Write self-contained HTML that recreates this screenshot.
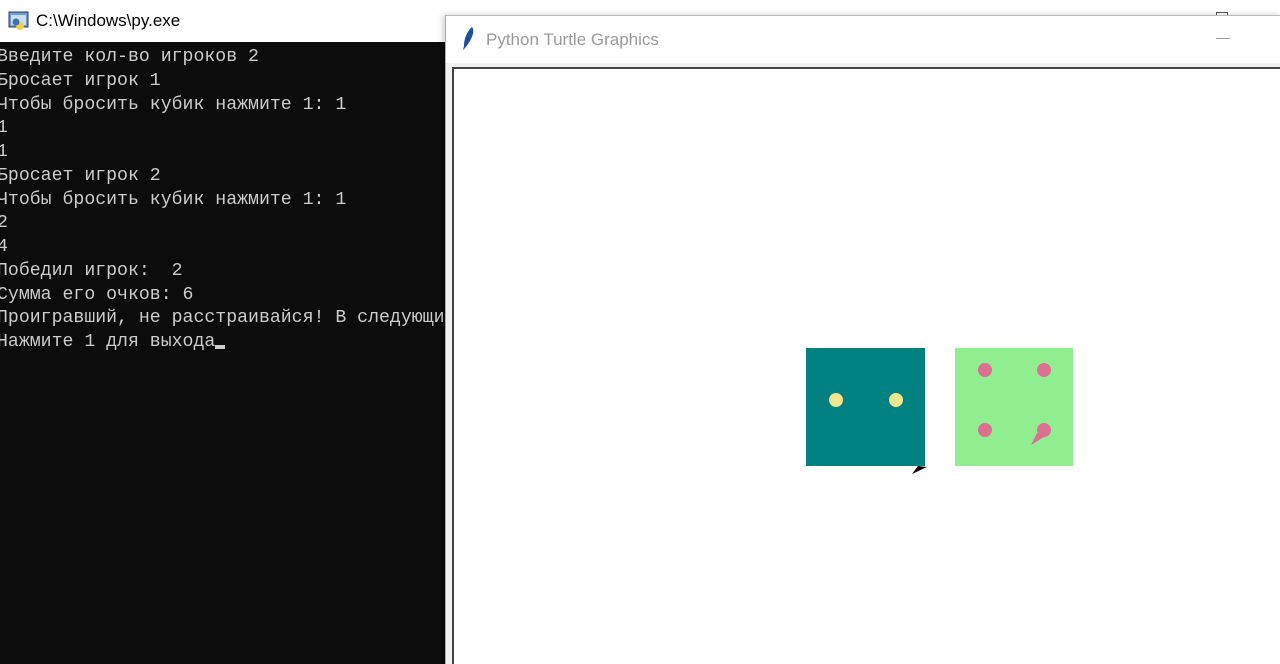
<!DOCTYPE html><html style="overflow:hidden;height:664px"><head><style>
body{margin:0;width:1280px;height:664px;overflow:hidden;background:#fff;position:relative;font-family:"Liberation Sans",sans-serif}
#con{position:absolute;left:0;top:42px;width:446px;height:622px;background:#0c0c0c;overflow:hidden}
#con pre{margin:0;position:absolute;left:-3px;top:4px;font-family:"Liberation Mono",monospace;font-size:18.2px;line-height:23.75px;color:#cccccc;white-space:pre}
#t1{position:absolute;left:36px;top:11px;font-size:17px;color:#000}
#tw{position:absolute;left:445px;top:15px;width:835px;height:649px;background:#f0f0f0;border-left:1px solid #aaa;border-top:1px solid #bbb;box-shadow:-2px 0 6px rgba(0,0,0,.2);overflow:hidden}
#tbar{position:absolute;left:0;top:0;right:0;height:47px;background:#fff}
#t2{position:absolute;left:40px;top:14px;font-size:17px;color:#999}
#cv{position:absolute;left:6px;top:51px;right:0;height:620px;background:#fff;border:2px solid #444;border-right:none;border-bottom:none}
</style></head><body>
<svg style="position:absolute;left:8px;top:10px" width="22" height="22"><rect x="1" y="2" width="19" height="15" fill="#6b9fd4" stroke="#335" stroke-width="1"/><rect x="3" y="5" width="15" height="10" fill="#cde"/><circle cx="12" cy="16" r="4" fill="#f2d046"/><circle cx="8" cy="12" r="3.5" fill="#3a70b0"/></svg>
<div id="t1">C:\Windows\py.exe</div>
<div id="con"><pre>Введите кол-во игроков 2
Бросает игрок 1
Чтобы бросить кубик нажмите 1: 1
1
1
Бросает игрок 2
Чтобы бросить кубик нажмите 1: 1
2
4
Победил игрок:  2
Сумма его очков: 6
Проигравший, не расстраивайся! В следующий раз
Нажмите 1 для выхода<span style="display:inline-block;width:10px;height:4px;background:#ccc;vertical-align:-3px"></span></pre></div>
<div style="position:absolute;left:1216px;top:12px;width:10px;height:6px;border:1px solid #555;border-bottom:none"></div>
<div id="tw">
<div id="tbar">
<svg style="position:absolute;left:14px;top:10px" width="16" height="26"><path d="M12 1 C16 6 10 16 5 22 L3 24 L4 20 C4 12 8 4 12 1Z" fill="#1f4f9a"/></svg>
<div id="t2">Python Turtle Graphics</div>
<div style="position:absolute;left:770px;top:22px;width:14px;height:1px;background:#999"></div>
</div>
<div id="cv">
<svg width="830" height="610" style="position:absolute;left:-2px;top:-2px">
<g transform="translate(-452,-67)">
<rect x="806" y="348" width="119" height="118" fill="#008080"/>
<circle cx="836" cy="400" r="7" fill="#f0e68c"/><circle cx="896" cy="400" r="7" fill="#f0e68c"/>
<path d="M912 474 L927 467 L918 466Z" fill="#000"/>
<rect x="955" y="348" width="118" height="118" fill="#90ee90"/>
<circle cx="985" cy="370" r="7" fill="#db7093"/><circle cx="1044" cy="370" r="7" fill="#db7093"/>
<circle cx="985" cy="430" r="7" fill="#db7093"/><circle cx="1044" cy="430" r="7" fill="#db7093"/>
<path d="M1031 445 L1044 437 L1037 433Z" fill="#db7093"/>
</g></svg>
</div>
</div>
</body></html>
